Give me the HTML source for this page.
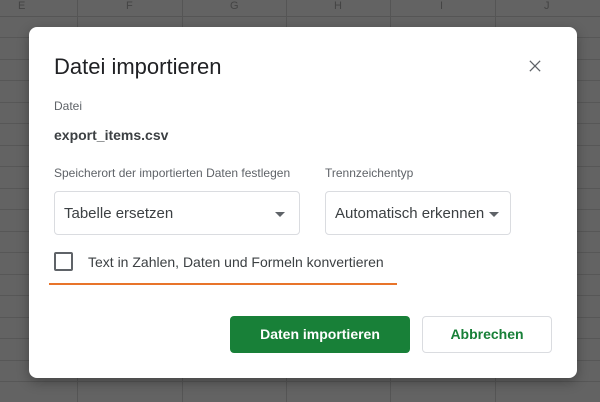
<!DOCTYPE html>
<html><head><style>
*{margin:0;padding:0;box-sizing:border-box}
body{width:600px;height:402px;overflow:hidden;background:#636363;font-family:"Liberation Sans",Roboto,sans-serif;position:relative}
.v{position:absolute;top:0;bottom:0;width:1px;background:#555}
.h{position:absolute;left:0;right:0;height:1px;background:#575757}
.col{position:absolute;top:0;font-size:11px;color:#444}
.dlg{position:absolute;left:29px;top:27px;width:548px;height:351px;background:#fff;border-radius:8px;box-shadow:0 4px 12px rgba(0,0,0,.3)}
.a{position:absolute}
.sel{position:absolute;border:1px solid #dadce0;border-radius:4px;height:44px;font-size:15px;color:#3c4043;padding:13px 0 0 9px}
.tri{position:absolute;top:20px;width:0;height:0;border-left:5px solid transparent;border-right:5px solid transparent;border-top:5px solid #5f6368}
</style></head><body>
<div class="v" style="left:77px"></div><div class="v" style="left:182px"></div><div class="v" style="left:286px"></div><div class="v" style="left:390px"></div><div class="v" style="left:495px"></div>
<div class="h" style="top:16px;background:#555"></div>
<div class="h" style="top:37px"></div><div class="h" style="top:59px"></div><div class="h" style="top:80px"></div><div class="h" style="top:102px"></div><div class="h" style="top:123px"></div><div class="h" style="top:145px"></div><div class="h" style="top:166px"></div><div class="h" style="top:188px"></div><div class="h" style="top:209px"></div><div class="h" style="top:231px"></div><div class="h" style="top:252px"></div><div class="h" style="top:274px"></div><div class="h" style="top:295px"></div><div class="h" style="top:317px"></div><div class="h" style="top:338px"></div><div class="h" style="top:360px"></div><div class="h" style="top:381px"></div>
<div class="col" style="left:18px">E</div><div class="col" style="left:126px">F</div><div class="col" style="left:230px">G</div><div class="col" style="left:334px">H</div><div class="col" style="left:440px">I</div><div class="col" style="left:544px">J</div>
<div class="dlg">
<div class="a" style="left:25px;top:27px;font-size:22px;color:#202124">Datei importieren</div>
<svg class="a" style="left:500px;top:33px" width="12" height="12" viewBox="0 0 14 14"><path d="M1 1L13 13M13 1L1 13" stroke="#5f6368" stroke-width="1.5"/></svg>
<div class="a" style="left:25px;top:72px;font-size:12px;color:#5f6368">Datei</div>
<div class="a" style="left:25px;top:100px;font-size:14px;font-weight:bold;color:#3c4043">export_items.csv</div>
<div class="a" style="left:25px;top:139px;font-size:12px;color:#5f6368">Speicherort der importierten Daten festlegen</div>
<div class="a" style="left:296px;top:139px;font-size:12px;color:#5f6368">Trennzeichentyp</div>
<div class="sel" style="left:25px;top:164px;width:246px">Tabelle ersetzen<div class="tri" style="left:220px"></div></div>
<div class="sel" style="left:296px;top:164px;width:186px">Automatisch erkennen<div class="tri" style="left:163px"></div></div>
<div class="a" style="left:25px;top:225px;width:19px;height:19px;border:2px solid #5f6368;border-radius:2px"></div>
<div class="a" style="left:59px;top:227px;font-size:14px;color:#3c4043">Text in Zahlen, Daten und Formeln konvertieren</div>
<div class="a" style="left:20px;top:256px;width:348px;height:2px;background:#e8742a"></div>
<div class="a" style="left:201px;top:289px;width:180px;height:37px;background:#188038;border-radius:4px;color:#fff;font-size:14px;font-weight:bold;text-align:center;line-height:37px">Daten importieren</div>
<div class="a" style="left:393px;top:289px;width:130px;height:37px;border:1px solid #dadce0;border-radius:4px;color:#188038;font-size:14px;font-weight:bold;text-align:center;line-height:35px">Abbrechen</div>
</div>
</body></html>
